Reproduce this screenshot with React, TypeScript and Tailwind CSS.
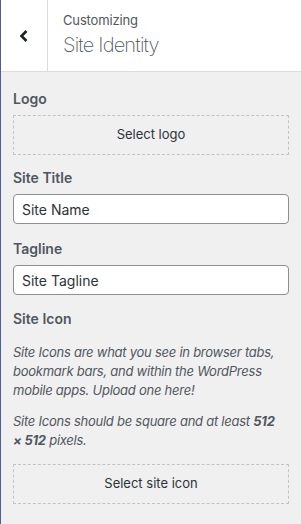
export default function App() {
  return (
    <div
      className="w-[301px] h-[524px] overflow-hidden bg-[#f0f0f1] border-l border-[#4f5aa0] text-[#50575e]"
      style={{ fontFamily: "Inter, 'Noto Sans', sans-serif" }}
    >
      {/* header */}
      <div className="flex h-[72px] bg-white border-b border-[#dcdcde]">
        <button className="w-[47px] flex items-center justify-center border-r border-[#dcdcde] text-[#1d2327]">
          <svg width="10" height="14" viewBox="0 0 10 14" fill="none">
            <path d="M7.5 2 L2.5 7 L7.5 12" stroke="currentColor" strokeWidth="2.6" />
          </svg>
        </button>
        <div className="pl-[15px] pt-[12px]">
          <div className="text-[13px] leading-[17px] tracking-[-0.15px]">Customizing</div>
          <div className="text-[20px] font-extralight leading-[28px] mt-[2px] tracking-[-0.8px]">Site Identity</div>
        </div>
      </div>

      <div className="px-[12px] pt-[18px]">
        <div className="text-[14px] font-semibold leading-[18px]">Logo</div>
        <button className="mt-[7px] w-full h-[40px] border border-dashed border-[#c3c4c7] text-[13px] text-[#2c3338]">
          Select logo
        </button>

        <div className="mt-[14px] text-[14px] font-semibold leading-[18px]">Site Title</div>
        <div className="mt-[7px] h-[30px] bg-white border border-[#8c8f94] rounded-[4px] px-[8px] flex items-center text-[14px] text-[#2c3338]">
          Site Name
        </div>

        <div className="mt-[16px] text-[14px] font-semibold leading-[18px]">Tagline</div>
        <div className="mt-[7px] h-[30px] bg-white border border-[#8c8f94] rounded-[4px] px-[8px] flex items-center text-[14px] text-[#2c3338]">
          Site Tagline
        </div>

        <div className="mt-[15px] text-[14px] font-semibold leading-[18px]">Site Icon</div>
        <p className="mt-[15px] text-[13px] italic leading-[19px] tracking-[-0.25px]">
          Site Icons are what you see in browser tabs, bookmark bars, and within the WordPress mobile apps. Upload one here!
        </p>
        <p className="mt-[12px] text-[13px] italic leading-[19px] tracking-[-0.25px]">
          Site Icons should be square and at least <strong>512 {"×\u00a0512"}</strong> pixels.
        </p>
        <button className="mt-[14px] w-full h-[40px] border border-dashed border-[#c3c4c7] text-[13px] text-[#2c3338]">
          Select site icon
        </button>
      </div>
    </div>
  );
}
